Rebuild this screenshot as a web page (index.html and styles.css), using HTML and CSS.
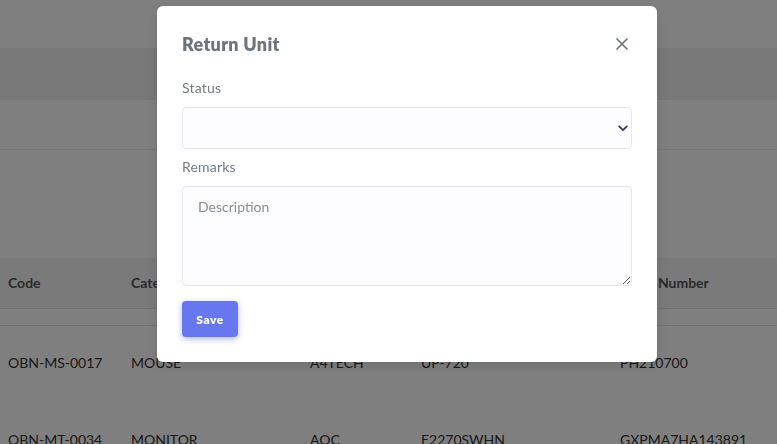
FILE: index.html
```html
<!DOCTYPE html>
<html>
<head>
<meta charset="utf-8">
<link rel="stylesheet" href="styles.css">
</head>
<body>
<div class="page">
  <div class="topbar"></div>
  <div class="subbar"></div>
  <div class="card">
    <div class="card-head"></div>
    <div class="card-space"></div>
    <div class="trow thead">
      <div>Code</div><div>Category</div><div>Brand</div><div>Model</div><div>Serial Number</div>
    </div>
    <div class="filter-row"></div>
    <div class="trow tbody row-1">
      <div>OBN-MS-0017</div><div>MOUSE</div><div>A4TECH</div><div>UP-720</div><div>PH210700</div>
    </div>
    <div class="trow tbody row-2">
      <div>OBN-MT-0034</div><div>MONITOR</div><div>AOC</div><div>E2270SWHN</div><div>GXPMA7HA143891</div>
    </div>
  </div>
</div>

<div class="overlay">
  <div class="modal">
    <div class="modal-header">
      <h5 class="modal-title">Return Unit</h5>
      <button class="close" type="button" aria-label="Close">
        <svg width="12" height="12" viewBox="0 0 12 12"><path d="M1 1L11 11M11 1L1 11" stroke="#6c757d" stroke-width="1.7" stroke-linecap="round"/></svg>
      </button>
    </div>
    <div class="modal-body">
      <label class="label">Status</label>
      <div class="select-wrap">
        <select class="form-control select"><option></option></select>
        <svg class="chev" width="10" height="7" viewBox="0 0 10 7"><path d="M1.2 1.4L5 5.2L8.8 1.4" fill="none" stroke="#34395e" stroke-width="1.8" stroke-linecap="round" stroke-linejoin="round"/></svg>
      </div>
      <label class="label label-2">Remarks</label>
      <textarea class="form-control textarea" placeholder="Description"></textarea>
      <button class="btn" type="button">Save</button>
    </div>
  </div>
</div>
</body>
</html>
```
FILE: styles.css
```css
* { box-sizing: border-box; }
html, body { margin: 0; padding: 0; }
body {
  width: 777px;
  height: 444px;
  overflow: hidden;
  font-family: "Lato", "Noto Sans", sans-serif;
  background: #fff;
}
.page { display: flex; flex-direction: column; }
.topbar { height: 48px; background: #ffffff; }
.subbar { height: 52px; background: #f1f1f1; }
.card { background: #fff; }
.card-head { height: 50px; border-bottom: 1px solid #ececec; }
.card-space { height: 108px; }
.trow {
  display: grid;
  grid-template-columns: 123px 179px 111px 199px 1fr;
  padding-left: 8px;
  font-size: 14px;
}
.thead {
  height: 51px;
  align-items: center;
  background: #f4f4f4;
  border-bottom: 1px solid #e2e2e2;
  color: #555;
  font-weight: 700;
  padding-bottom: 2px;
}
.filter-row { height: 17px; border-bottom: 1px solid #e2e2e2; }
.tbody {
  align-items: center;
  color: #333;
}
.row-1 { height: 72px; }
.row-2 { height: 82px; }

.overlay {
  position: fixed;
  inset: 0;
  background: rgba(0,0,0,0.5);
}
.modal {
  position: absolute;
  left: 157px;
  top: 6px;
  width: 500px;
  height: 356px;
  background: #fff;
  border-radius: 6px;
  box-shadow: 0 4px 12px rgba(0,0,0,0.12);
}
.modal-header {
  display: flex;
  align-items: center;
  justify-content: space-between;
  padding: 25px 25px 0 25px;
}
.modal-title {
  margin: 0;
  font-size: 18px;
  line-height: 26px;
  font-weight: 800;
  letter-spacing: 0.3px;
  color: #6c757d;
}
.close {
  border: 0;
  background: none;
  padding: 0;
  margin-right: 4px;
  width: 12px;
  height: 12px;
  display: flex;
}
.modal-body {
  padding: 21px 25px 25px 25px;
  display: flex;
  flex-direction: column;
  align-items: flex-start;
}
.label {
  font-size: 14px;
  line-height: 20px;
  color: #747c83;
  margin-bottom: 9px;
  letter-spacing: 0.2px;
}
.label-2 { margin-top: 8px; }
.form-control {
  width: 450px;
  background: #fdfdff;
  border: 1px solid #e4e6fc;
  border-radius: 4px;
  font-family: inherit;
  font-size: 14px;
  outline: none;
}
.select-wrap { position: relative; }
.select {
  height: 42px;
  display: block;
  appearance: none;
  -webkit-appearance: none;
}
.chev {
  position: absolute;
  right: 4px;
  top: 18px;
}
.textarea {
  height: 100px;
  padding: 11px 15px;
  color: #495057;
  resize: vertical;
  display: block;
}
.textarea::placeholder { color: #868e96; }
.btn {
  margin-top: 15px;
  width: 56px;
  height: 36px;
  border: 0;
  border-radius: 4px;
  background: #6777ef;
  color: #fff;
  font-family: inherit;
  font-size: 12px;
  font-weight: 800;
  letter-spacing: 0.5px;
  box-shadow: 0 2px 6px #acb5f6;
}
```
